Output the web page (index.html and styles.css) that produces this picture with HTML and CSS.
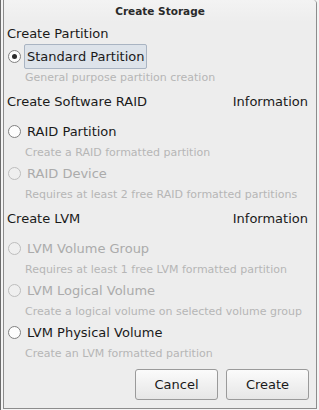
FILE: index.html
```html
<!DOCTYPE html>
<html>

<head>
    <title>Create Storage</title>
    <link rel="stylesheet" href="styles.css">
</head>

<body>
    <div class="backdrop">
        <div class="dialog">
            <div class="titlebar">Create Storage</div>

            <div class="content">
                <div class="section-head first">
                    <span>Create Partition</span>
                </div>
                <div class="option selected">
                    <span class="radio checked"></span>
                    <span class="label">Standard Partition</span>
                </div>
                <div class="desc">General purpose partition creation</div>

                <div class="section-head">
                    <span>Create Software RAID</span>
                    <span>Information</span>
                </div>
                <div class="option after-head">
                    <span class="radio"></span>
                    <span class="label">RAID Partition</span>
                </div>
                <div class="desc">Create a RAID formatted partition</div>
                <div class="option disabled">
                    <span class="radio"></span>
                    <span class="label">RAID Device</span>
                </div>
                <div class="desc">Requires at least 2 free RAID formatted partitions</div>

                <div class="section-head">
                    <span>Create LVM</span>
                    <span>Information</span>
                </div>
                <div class="option after-head disabled">
                    <span class="radio"></span>
                    <span class="label">LVM Volume Group</span>
                </div>
                <div class="desc">Requires at least 1 free LVM formatted partition</div>
                <div class="option disabled">
                    <span class="radio"></span>
                    <span class="label">LVM Logical Volume</span>
                </div>
                <div class="desc">Create a logical volume on selected volume group</div>
                <div class="option">
                    <span class="radio"></span>
                    <span class="label">LVM Physical Volume</span>
                </div>
                <div class="desc">Create an LVM formatted partition</div>
            </div>

            <div class="buttons">
                <button class="btn">Cancel</button>
                <button class="btn">Create</button>
            </div>
        </div>
    </div>
</body>

</html>
```

FILE: styles.css
```css
/* Page and window frame */
body {
    margin: 0;
    font-family: "DejaVu Sans", sans-serif;
    font-size: 13px;
    color: #1a1a1a;
    background-color: #f4f4f4;
}

.backdrop {
    height: 410px;
    padding-left: 2px;
    border-left: 1px solid #6c6c6c;
    box-sizing: border-box;
}

.dialog {
    width: 314px;
    height: 409px;
    box-sizing: border-box;
    background-color: #ededed;
    border-left: 1px solid #8c8c8c;
    border-right: 1px solid #8c8c8c;
    border-bottom: 1px solid #8c8c8c;
    border-top-right-radius: 4px;
    display: flex;
    flex-direction: column;
}

/* Title bar */
.titlebar {
    height: 22px;
    line-height: 22px;
    text-align: center;
    font-weight: bold;
    font-size: 10.5px;
    color: #2a2a2a;
    background: linear-gradient(#f3f3f3, #ededed);
    border-top-right-radius: 4px;
}

.content {
    padding: 0 8px 0 3px;
}

/* Section headings */
.section-head {
    display: flex;
    justify-content: space-between;
    height: 22px;
    line-height: 22px;
    margin-top: 5px;
}

.section-head.first {
    margin-top: 1px;
}

/* Radio options */
.option {
    display: flex;
    align-items: center;
    height: 21px;
    margin-top: 2px;
}

.option.after-head {
    margin-top: 8px;
}

.option.selected {
    height: 25px;
    margin-top: -1px;
}

.option .label {
    padding: 0 3px;
    line-height: 21px;
}

.option.selected .label {
    line-height: 23px;
    background-color: #dde3ea;
    border: 1px solid #a9b4c2;
    border-radius: 2px;
    padding: 0 2px;
}

.option.disabled .label {
    color: #ababab;
}

.radio {
    width: 11px;
    height: 11px;
    margin: 0 3px 0 1px;
    border: 1px solid #808080;
    border-radius: 50%;
    background-color: #fdfdfd;
    position: relative;
    flex-shrink: 0;
}

.radio.checked::after {
    content: "";
    position: absolute;
    left: 3px;
    top: 3px;
    width: 5px;
    height: 5px;
    border-radius: 50%;
    background-color: #2a2a2a;
}

.option.disabled .radio {
    border-color: #bdbdbd;
    background-color: #efefef;
}

/* Descriptions under options */
.desc {
    font-size: 11px;
    color: #b6b6b6;
    height: 16px;
    line-height: 16px;
    padding-left: 18px;
    margin-top: 3px;
}

.option.selected + .desc {
    margin-top: 1px;
}

.desc + .section-head {
    margin-top: 5px;
}

.desc + .option {
    margin-top: 2px;
}

/* Bottom buttons */
.buttons {
    display: flex;
    justify-content: flex-end;
    gap: 8px;
    padding: 0 7px 0 0;
    margin-top: 7px;
}

.btn {
    width: 83px;
    height: 31px;
    font-family: "DejaVu Sans", sans-serif;
    font-size: 13px;
    color: #1a1a1a;
    background: linear-gradient(#fbfbfb, #e6e6e6);
    border: 1px solid #9a9a9a;
    border-radius: 3px;
}
```
